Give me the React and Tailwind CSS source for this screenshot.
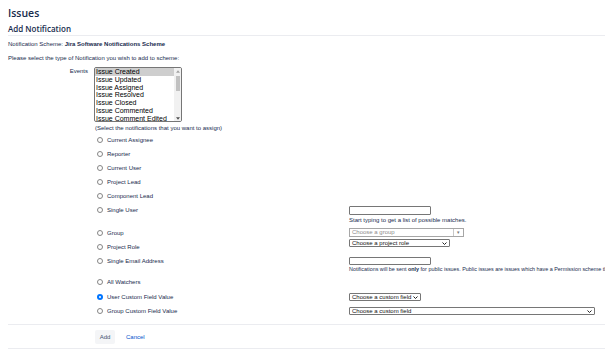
const FIELD_TEXT = 'text-[6px] leading-[8px] text-[#172b4d]';

const EVENTS = [
  'Issue Created',
  'Issue Updated',
  'Issue Assigned',
  'Issue Resolved',
  'Issue Closed',
  'Issue Commented',
  'Issue Comment Edited',
];

function Chevron() {
  return (
    <svg viewBox="0 0 10 6" className="w-[5px] h-[3px] flex-shrink-0">
      <path d="M1 1l4 4 4-4" stroke="#222" strokeWidth={2} fill="none" />
    </svg>
  );
}

function Radio({ label, checked }) {
  return (
    <div className="flex items-center h-[14px]">
      {checked ? (
        <span className="ml-[3px] w-[6px] h-[6px] rounded-full bg-[#0075ff] flex items-center justify-center">
          <span className="w-[2px] h-[2px] rounded-full bg-white" />
        </span>
      ) : (
        <span className="ml-[3px] w-[6px] h-[6px] rounded-full border border-[#858585] bg-white" />
      )}
      <span className={`ml-[4px] ${FIELD_TEXT}`}>{label}</span>
    </div>
  );
}

function Row({ label, checked, height = 'h-[14px]', children }) {
  return (
    <div className={`flex ${height}`}>
      <div className="w-[255px] flex-shrink-0">
        <Radio label={label} checked={checked} />
      </div>
      <div className="flex flex-col min-w-0">{children}</div>
    </div>
  );
}

function Select({ width, text, className = 'mt-[3px]' }) {
  return (
    <div
      className={`${width} ${className} h-[8px] border border-[#767676] rounded-[1px] bg-white flex items-center justify-between px-[2px]`}
    >
      <span className="text-[6px] leading-[6px] text-[#111]">{text}</span>
      <Chevron />
    </div>
  );
}

export default function App() {
  return (
    <div className="w-[605px] h-[353px] overflow-hidden bg-white font-['Liberation_Sans',Arial,sans-serif] text-[#172b4d]">
      <div className="pl-[8px] pt-[4px]">
        {/* Header */}
        <h1 className="font-['Open_Sans',sans-serif] font-semibold text-[10.5px] leading-[18px] text-[#172b4d]">
          Issues
        </h1>
        <h2 className="mt-[1px] font-['Open_Sans',sans-serif] font-semibold text-[8px] leading-[12px] text-[#172b4d] border-b border-[#ebecf0]">
          Add Notification
        </h2>

        <p className={`mt-[4px] ${FIELD_TEXT}`}>
          Notification Scheme: <b>Jira Software Notifications Scheme</b>
        </p>
        <p className={`mt-[6px] ${FIELD_TEXT}`}>
          Please select the type of Notification you wish to add to scheme:
        </p>

        {/* Events */}
        <div className="mt-[5px] flex">
          <div className={`w-[80px] text-right ${FIELD_TEXT}`}>Events</div>
          <div className="ml-[6px] w-[88px] h-[55px] border border-[#767676] rounded-[2px] flex overflow-hidden bg-white">
            <div className="flex-1">
              {EVENTS.map((e, i) => (
                <div
                  key={e}
                  className={`h-[7.8px] leading-[7.8px] text-[7px] pl-[1px] text-black whitespace-nowrap ${
                    i === 0 ? 'bg-[#cecece]' : ''
                  }`}
                >
                  {e}
                </div>
              ))}
            </div>
            <div className="w-[7px] bg-[#f1f1f1] flex flex-col items-center">
              <div className="h-[6px] flex items-center">
                <svg viewBox="0 0 6 4" className="w-[4px] h-[3px]">
                  <path d="M3 0L6 4H0z" fill="#a3a3a3" />
                </svg>
              </div>
              <div className="mt-[2px] w-[4px] h-[15px] bg-[#c1c1c1]" />
              <div className="flex-1" />
              <div className="h-[6px] flex items-center">
                <svg viewBox="0 0 6 4" className="w-[4px] h-[3px]">
                  <path d="M0 0H6L3 4z" fill="#505050" />
                </svg>
              </div>
            </div>
          </div>
        </div>
        <p className={`ml-[87px] mt-[2px] ${FIELD_TEXT}`}>
          (Select the notifications that you want to assign)
        </p>

        {/* Notification types */}
        <div className="ml-[86px] mt-[1px]">
          <Row label="Current Assignee" />
          <Row label="Reporter" />
          <Row label="Current User" />
          <Row label="Project Lead" />
          <Row label="Component Lead" />
          <Row label="Single User" height="h-[23px]">
            <div className="mt-[3px] w-[82px] h-[9px] border border-[#767676] rounded-[1px] bg-white" />
            <span className={`mt-[1px] ${FIELD_TEXT}`}>Start typing to get a list of possible matches.</span>
          </Row>
          <Row label="Group">
            <div className="mt-[2px] w-[115px] h-[9px] border border-[#a6a6a6] bg-white flex">
              <span className="flex-1 pl-[2px] text-[6px] leading-[7px] text-[#8c8c8c]">Choose a group</span>
              <span className="w-[10px] border-l border-[#c8c8c8] flex items-center justify-center text-[5px] text-[#777]">
                ▾
              </span>
            </div>
          </Row>
          <Row label="Project Role">
            <Select width="w-[101px]" text="Choose a project role" className="mt-[-1px]" />
          </Row>
          <Row label="Single Email Address" height="h-[21px]">
            <div className="mt-[3px] w-[82px] h-[8px] border border-[#767676] rounded-[1px] bg-white" />
            <span className="whitespace-nowrap text-[5.4px] leading-[8px] text-[#172b4d]">
              Notifications will be sent <b>only</b> for public issues. Public issues are issues which have a
              Permission scheme that gives the permission to browse to anyone.
            </span>
          </Row>
          <Row label="All Watchers" height="h-[15px]" />
          <Row label="User Custom Field Value" checked>
            <Select width="w-[72px]" text="Choose a custom field" />
          </Row>
          <Row label="Group Custom Field Value">
            <Select width="w-[246px]" text="Choose a custom field" />
          </Row>
        </div>

        {/* Actions */}
        <div className="mt-[6px] border-t border-[#ebecf0] pt-[5px] pl-[87px] flex items-center">
          <button className="w-[20px] h-[14px] rounded-[2px] bg-[#f4f5f7] text-[6px] text-[#42526e]">Add</button>
          <a className="ml-[11px] text-[6px] text-[#0052cc]">Cancel</a>
        </div>
        <div className="mt-[4px] border-t border-[#ebecf0]" />
      </div>
    </div>
  );
}
